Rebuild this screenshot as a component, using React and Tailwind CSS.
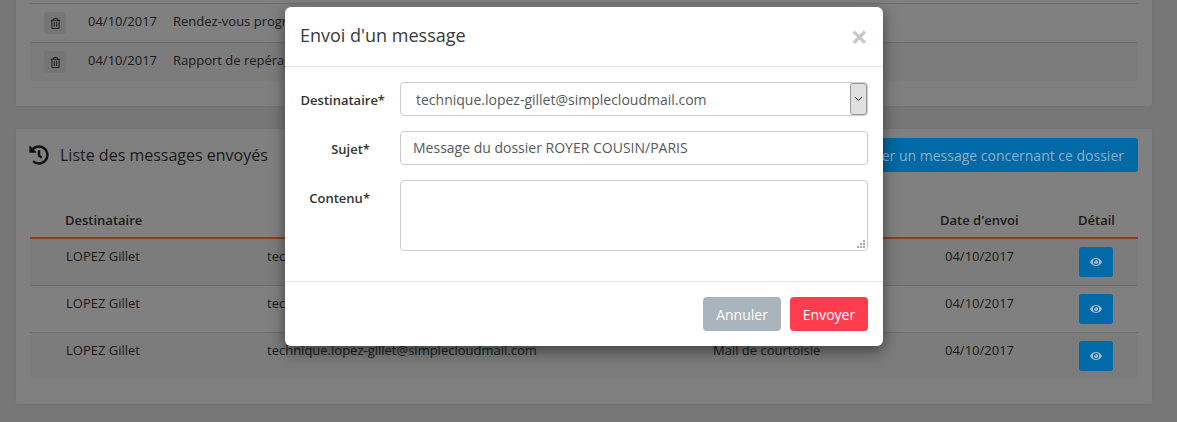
import React from 'react';
import { FaHistory, FaEye, FaRegTrashAlt } from 'react-icons/fa';

const docs = [
  { date: '04/10/2017', label: 'Rendez-vous programmé', alt: false },
  { date: '04/10/2017', label: 'Rapport de repérage', alt: true },
];

const sent = [
  { h: 'h-[47px] border-b', alt: true },
  { h: 'h-[47px] border-b', alt: false },
  { h: 'h-[45px]', alt: true },
];

function DocRow({ date, label, alt }) {
  return (
    <div className={`flex h-[39px] border-t border-[#6c6c6c] pt-[7px] ${alt ? 'bg-[#7c7c7c]' : ''}`}>
      <div className="ml-[14px] mt-[1px] flex h-[22px] w-[22px] items-center justify-center rounded-[3px] bg-[#757575]">
        <FaRegTrashAlt className="text-[11px] text-[#222]" />
      </div>
      <span className="ml-[22px] text-[13px] leading-[20px]">{date}</span>
      <span className="ml-[16px] text-[13px] leading-[20px]">{label}</span>
    </div>
  );
}

function SentRow({ h, alt }) {
  return (
    <div className={`flex border-[#6c6c6c] pt-[8px] text-[13px] leading-[18px] ${h} ${alt ? 'bg-[#7c7c7c]' : ''}`}>
      <span className="ml-[36px] w-[201px]">LOPEZ Gillet</span>
      <span className="w-[446px]">technique.lopez-gillet@simplecloudmail.com</span>
      <span className="w-[232px]">Mail de courtoisie</span>
      <span className="w-[134px]">04/10/2017</span>
      <button className="flex h-[30px] w-[34px] items-center justify-center rounded-[3px] bg-[#0069a6] text-[12px] text-[#9dbbd0]">
        <FaEye />
      </button>
    </div>
  );
}

function FormRow({ label, labelW, children }) {
  return (
    <div className="flex">
      <label className={`pt-[9px] text-right text-[13px] font-semibold leading-[18px] text-[#333] ${labelW}`}>{label}</label>
      {children}
    </div>
  );
}

export default function App() {
  return (
    <div className="relative h-[422px] w-[1177px] overflow-hidden bg-[#777777] font-['Open_Sans',sans-serif] text-[#1a1a1a]">
      {/* page derrière la modale, couleurs déjà assombries */}
      <div className="flex flex-col gap-[21px] pl-[15px] pr-[24px]">
        <div className="h-[107px] rounded-b-[3px] border border-t-0 border-[#747474] bg-[#808080] px-[14px] pt-[3px]">
          {docs.map((d) => (
            <DocRow key={d.label} {...d} />
          ))}
        </div>

        <div className="h-[277px] rounded-[3px] border border-[#747474] bg-[#808080] px-[14px] pt-[9px]">
          <div className="flex h-[34px] items-center justify-between">
            <div className="flex items-center">
              <FaHistory className="-ml-[1px] text-[20px] text-[#111]" />
              <span className="ml-[11px] text-[16px]">Liste des messages envoyés</span>
            </div>
            <button className="h-[34px] rounded-[3px] bg-[#0069a6] px-[14px] text-[14px] text-[#8fafc4]">
              Envoyer un message concernant ce dossier
            </button>
          </div>
          <div className="mt-[39px] flex h-[28px] border-b-2 border-[#8c3f1a] text-[13px] font-semibold leading-[18px]">
            <span className="ml-[35px] w-[875px]">Destinataire</span>
            <span className="w-[138px]">Date d'envoi</span>
            <span>Détail</span>
          </div>
          {sent.map((r, i) => (
            <SentRow key={i} {...r} />
          ))}
        </div>
      </div>

      <div className="absolute left-[285px] top-[7px] h-[339px] w-[598px] rounded-[6px] bg-white shadow-[0_5px_15px_rgba(0,0,0,0.5)]">
        <div className="flex h-[60px] items-center justify-between border-b border-[#e5e5e5] pl-[15px] pr-[15px]">
          <h5 className="-mt-[2px] text-[18px] text-[#373a3c]">Envoi d'un message</h5>
          <span className="text-[30px] font-bold leading-none text-[#c8c8c8]">×</span>
        </div>

        <div className="flex h-[215px] flex-col gap-[15px] border-b border-[#e5e5e5] pt-[15px]">
          <FormRow label="Destinataire*" labelW="w-[100px]">
            <div className="ml-[15px] flex h-[34px] w-[468px] items-center justify-between rounded-[4px] border border-[#ccc] pl-[15px] text-[14px] text-[#55595c]">
              <span>technique.lopez-gillet@simplecloudmail.com</span>
              <span className="flex h-full w-[17px] items-center justify-center rounded-[3px] border border-[#999] bg-[#e0e0e0]">
                <svg width="9" height="6" viewBox="0 0 9 6" fill="none" stroke="#333" strokeWidth="1">
                  <path d="M1 1l3.5 3.5L8 1" />
                </svg>
              </span>
            </div>
          </FormRow>
          <FormRow label="Sujet*" labelW="w-[85px]">
            <div className="ml-[30px] flex h-[34px] w-[468px] items-center rounded-[4px] border border-[#ccc] pb-[1px] pl-[12px] text-[14px] text-[#55595c]">
              Message du dossier ROYER COUSIN/PARIS
            </div>
          </FormRow>
          <FormRow label="Contenu*" labelW="w-[85px]">
            <div className="relative ml-[30px] h-[71px] w-[468px] rounded-[4px] border border-[#ccc]">
              <svg className="absolute bottom-[1px] right-[1px]" width="10" height="10" viewBox="0 0 10 10" fill="#aaa">
                <rect x="7" y="1" width="2" height="2" />
                <rect x="4" y="4" width="2" height="2" />
                <rect x="7" y="4" width="2" height="2" />
                <rect x="1" y="7" width="2" height="2" />
                <rect x="4" y="7" width="2" height="2" />
                <rect x="7" y="7" width="2" height="2" />
              </svg>
            </div>
          </FormRow>
        </div>

        <div className="flex justify-end gap-[9px] pr-[15px] pt-[15px]">
          <button className="h-[34px] w-[78px] rounded-[4px] bg-[#a9b4bd] text-[14px] text-white">Annuler</button>
          <button className="h-[34px] w-[78px] rounded-[4px] bg-[#ff3d4f] text-[14px] text-white">Envoyer</button>
        </div>
      </div>
    </div>
  );
}
